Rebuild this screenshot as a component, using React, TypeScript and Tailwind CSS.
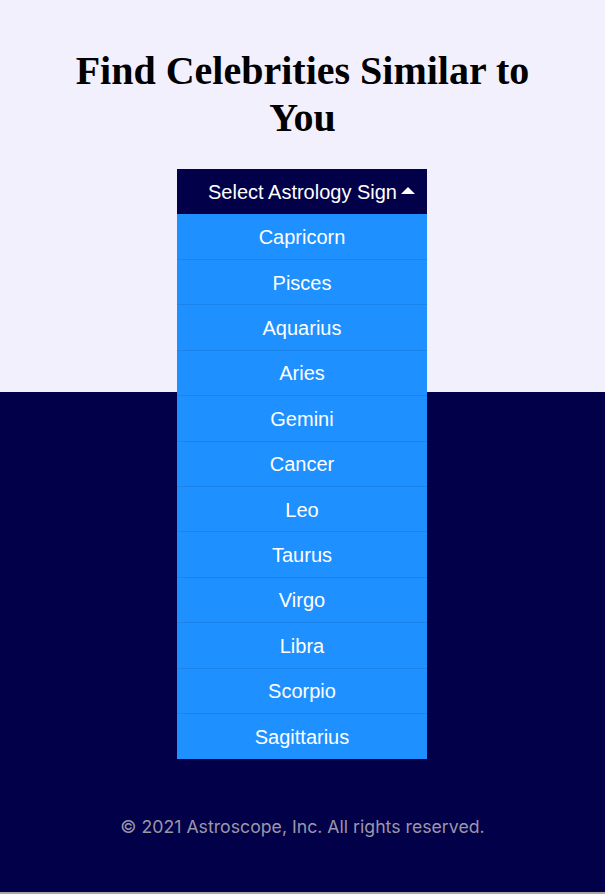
import React from "react";

const signs = [
  "Capricorn",
  "Pisces",
  "Aquarius",
  "Aries",
  "Gemini",
  "Cancer",
  "Leo",
  "Taurus",
  "Virgo",
  "Libra",
  "Scorpio",
  "Sagittarius",
];

export default function App() {
  return (
    <div className="w-[605px] min-h-[896px] flex flex-col">
      <section className="h-[392px] bg-[#f3f0fe] flex flex-col items-center pt-[47px]">
        <h1
          className="w-[525px] text-center text-[40px] leading-[47px] font-bold text-black"
          style={{ fontFamily: '"Liberation Serif", "Times New Roman", serif' }}
        >
          Find Celebrities Similar to You
        </h1>
        <div className="relative mt-[28px] w-[250px] ml-[-1px] z-10">
          <button
            className="w-full h-[45px] bg-[#020048] text-white flex items-center pl-[31px] gap-[4px] text-[20px]"
            style={{ fontFamily: '"Liberation Sans", Arial, sans-serif' }}
          >
            <span>Select Astrology Sign</span>
            <svg width="14" height="8" viewBox="0 0 14 8" className="mt-[-3px]">
              <polygon points="0,8 7,1 14,8" fill="white" />
            </svg>
          </button>
          <ul
            className="absolute left-0 top-[45px] w-full bg-[#1e90ff] pt-[0.5px]"
            style={{ fontFamily: '"Liberation Sans", Arial, sans-serif' }}
          >
            {signs.map((s, i) => (
              <li
                key={s}
                className={`h-[45.42px] flex items-center justify-center text-white text-[20px] pt-[1px] ${
                  i < signs.length - 1 ? "border-b border-[#1a84ea]" : ""
                }`}
              >
                {s}
              </li>
            ))}
          </ul>
        </div>
      </section>
      <section className="h-[502px] bg-[#020048] flex flex-col items-center justify-end pb-[51px] border-b-2 border-[#a8a8a8]">
        <p
          className="text-[17.7px] text-[#9a98a8]"
          style={{ fontFamily: 'Inter, "Noto Sans", sans-serif' }}
        >
          © 2021 Astroscope, Inc. All rights reserved.
        </p>
      </section>
    </div>
  );
}
